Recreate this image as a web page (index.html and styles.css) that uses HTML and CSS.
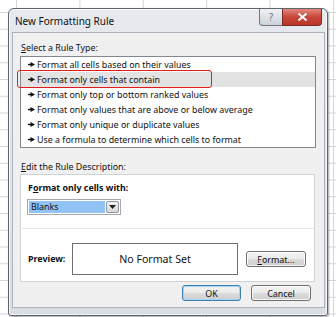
FILE: index.html
```html
<!DOCTYPE html>
<html>
<head>
<meta charset="utf-8">
<link rel="stylesheet" href="styles.css">
</head>
<body>
<div class="dialog">
  <div class="titlebar">
    <span class="title">New Formatting Rule</span>
    <div class="caption-buttons">
      <span class="cap-btn help">?</span>
      <span class="cap-btn close"><svg width="11" height="8" viewBox="0 0 11 8"><path d="M1.5 0.5 L9.5 7.5 M9.5 0.5 L1.5 7.5" stroke="#fff" stroke-width="2"/></svg></span>
    </div>
  </div>
  <div class="client">
    <div class="label"><u>S</u>elect a Rule Type:</div>
    <div class="list-wrap">
      <div class="list">
        <div class="row"><svg class="arr" width="7" height="5" viewBox="0 0 7 5"><path d="M0 2.5 H3" stroke="#111" stroke-width="1.4"/><path d="M2.5 0 L7 2.5 L2.5 5 Z" fill="#111"/></svg>Format all cells based on their values</div>
        <div class="row sel"><svg class="arr" width="7" height="5" viewBox="0 0 7 5"><path d="M0 2.5 H3" stroke="#111" stroke-width="1.4"/><path d="M2.5 0 L7 2.5 L2.5 5 Z" fill="#111"/></svg>Format only cells that contain</div>
        <div class="row"><svg class="arr" width="7" height="5" viewBox="0 0 7 5"><path d="M0 2.5 H3" stroke="#111" stroke-width="1.4"/><path d="M2.5 0 L7 2.5 L2.5 5 Z" fill="#111"/></svg>Format only top or bottom ranked values</div>
        <div class="row"><svg class="arr" width="7" height="5" viewBox="0 0 7 5"><path d="M0 2.5 H3" stroke="#111" stroke-width="1.4"/><path d="M2.5 0 L7 2.5 L2.5 5 Z" fill="#111"/></svg>Format only values that are above or below average</div>
        <div class="row"><svg class="arr" width="7" height="5" viewBox="0 0 7 5"><path d="M0 2.5 H3" stroke="#111" stroke-width="1.4"/><path d="M2.5 0 L7 2.5 L2.5 5 Z" fill="#111"/></svg>Format only unique or duplicate values</div>
        <div class="row"><svg class="arr" width="7" height="5" viewBox="0 0 7 5"><path d="M0 2.5 H3" stroke="#111" stroke-width="1.4"/><path d="M2.5 0 L7 2.5 L2.5 5 Z" fill="#111"/></svg>Use a formula to determine which cells to format</div>
      </div>
      <div class="annot"></div>
    </div>
    <div class="label label2"><u>E</u>dit the Rule Description:</div>
    <div class="panel">
      <div class="bold">F<u>o</u>rmat only cells with:</div>
      <div class="combo">
        <span class="combo-text">Blanks</span>
        <span class="combo-btn"><svg width="7" height="4" viewBox="0 0 7 4"><path d="M0 0 H7 L3.5 4 Z" fill="#222"/></svg></span>
      </div>
      <div class="sep"></div>
      <div class="preview-row">
        <span class="bold prev-label">Preview:</span>
        <div class="preview-box">No Format Set</div>
        <span class="btn fmt-btn"><u>F</u>ormat...</span>
      </div>
    </div>
    <div class="actions">
      <span class="btn ok">OK</span>
      <span class="btn">Cancel</span>
    </div>
  </div>
</div>
</body>
</html>
```

FILE: styles.css
```css
html, body {
  margin: 0;
  padding: 0;
}
body {
  width: 336px;
  height: 317px;
  overflow: hidden;
  font-family: "Noto Sans", "Open Sans", sans-serif;
  color: #111;
  background-color: #fff;
  background-image:
    linear-gradient(to right, #d6d6d6 1px, transparent 1px),
    linear-gradient(to bottom, #d6d6d6 1px, transparent 1px);
  background-size: 63.4px 100%, 100% 16.75px;
  background-position: 16px 0, 0 12px;
}
.dialog {
  box-sizing: border-box;
  margin: 8px 0 0 8px;
  width: 320px;
  height: 308px;
  border: 1px solid #5e646c;
  border-radius: 6px 6px 3px 3px;
  background: linear-gradient(#e6eaef, #d9dee5);
  padding: 0 2px 7px 3px;
  box-shadow: 1px 1px 2px rgba(0,0,0,0.35), inset 0 0 0 1px rgba(255,255,255,0.7);
  display: flex;
  flex-direction: column;
}
.titlebar {
  height: 23px;
  display: flex;
  align-items: flex-start;
}
.title {
  padding: 6px 0 0 3px;
  font-size: 10px;
  line-height: 13px;
  color: #111;
}
.caption-buttons {
  margin-left: auto;
  margin-right: 3px;
  display: flex;
}
.cap-btn {
  box-sizing: border-box;
  height: 17px;
  display: flex;
  align-items: center;
  justify-content: center;
  border: 1px solid #6f7680;
  border-top: none;
}
.help {
  width: 23px;
  border-radius: 0 0 0 4px;
  border-right: none;
  background: linear-gradient(#eef1f4, #cdd3da);
  color: #7b8088;
  font-size: 10px;
  font-family: "DejaVu Sans", sans-serif;
}
.close {
  width: 40px;
  border-radius: 0 0 4px 0;
  border-color: #7a2a22;
  background: linear-gradient(#e2887d, #c8473a 50%, #b8352a);
}
.client {
  flex: 1;
  box-sizing: border-box;
  background: #f0f0f0;
  border: 1px solid #aeb4bc;
  padding: 8px 0 0 7px;
  font-size: 8.9px;
}
.label {
  line-height: 14px;
  height: 14px;
  margin-bottom: 1px;
  padding-left: 1px;
}
.label2 {
  margin-top: 12px;
  margin-bottom: 0;
}
.list-wrap {
  position: relative;
  width: 296px;
}
.list {
  box-sizing: border-box;
  width: 296px;
  border: 1px solid #828790;
  background: #fff;
}
.row {
  height: 15px;
  line-height: 15px;
  padding-left: 7px;
  display: flex;
  align-items: center;
  white-space: nowrap;
}
.row .arr {
  margin-right: 2px;
  flex: none;
}
.row.sel {
  background: #e3e3e3;
}
.annot {
  position: absolute;
  left: -3px;
  top: 14px;
  width: 195px;
  height: 18px;
  box-sizing: border-box;
  border: 1px solid #e21b1b;
  border-radius: 3px;
}
.panel {
  box-sizing: border-box;
  width: 295px;
  height: 108px;
  background: #fff;
  border: 1px solid #cfd3d8;
  padding: 6px 0 0 7px;
}
.bold {
  font-weight: bold;
  line-height: 14px;
}
.combo {
  box-sizing: border-box;
  margin-top: 4px;
  margin-left: -1px;
  width: 94px;
  height: 16px;
  border: 1px solid #a4a8ae;
  background: #fff;
  display: flex;
  padding: 1px;
}
.combo-text {
  width: 77px;
  background: #92c3f7;
  line-height: 12px;
  padding-left: 2px;
  box-sizing: border-box;
}
.combo-btn {
  box-sizing: border-box;
  margin-left: 1px;
  width: 13px;
  border: 1px solid #8f949a;
  border-radius: 2px;
  background: linear-gradient(#f4f4f4, #d8d8d8);
  display: flex;
  align-items: center;
  justify-content: center;
}
.sep {
  margin: 13px 0 0 -6px;
  width: 292px;
  height: 1px;
  background: #e4e6e9;
}
.preview-row {
  margin-top: 14px;
  display: flex;
  align-items: center;
}
.prev-label {
  width: 44px;
}
.preview-box {
  box-sizing: border-box;
  width: 166px;
  height: 32px;
  border: 1px solid #6e6e6e;
  font-size: 10.6px;
  display: flex;
  align-items: center;
  justify-content: center;
}
.btn {
  box-sizing: border-box;
  height: 16px;
  width: 60px;
  border: 1px solid #707070;
  border-radius: 3px;
  background: linear-gradient(#f3f3f3, #ebebeb 50%, #dbdbdb 51%, #cfcfcf);
  display: flex;
  align-items: center;
  justify-content: center;
  box-shadow: inset 0 0 0 1px rgba(255,255,255,0.8);
}
.fmt-btn {
  margin-left: 8px;
}
.actions {
  display: flex;
  justify-content: flex-end;
  gap: 10px;
  margin-top: 3px;
  padding-right: 13px;
}
.ok {
  width: 59px;
  border-color: #3c7fb1;
  box-shadow: inset 0 0 0 1px #a7d6f5;
}
```
